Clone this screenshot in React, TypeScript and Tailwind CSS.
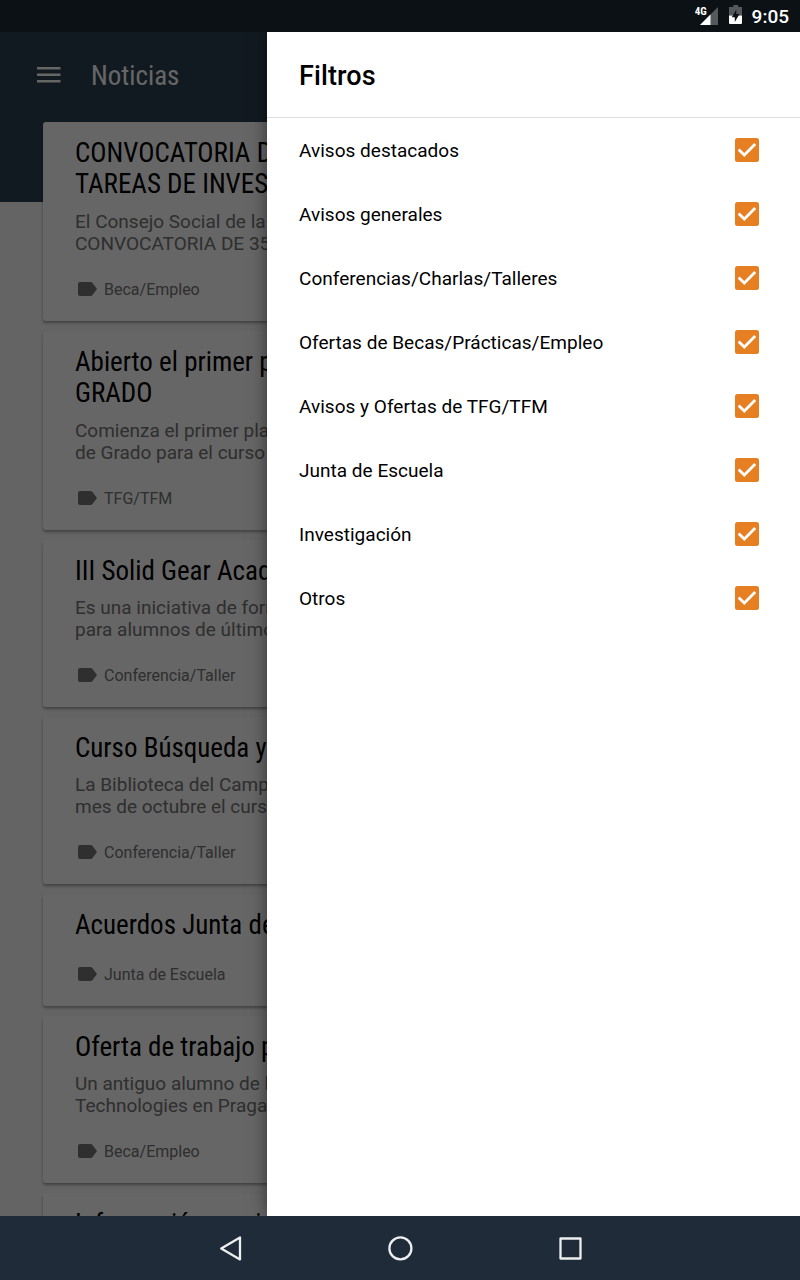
import React from "react";

type Notice = { title: string[]; body: string[]; tag: string };

const notices: Notice[] = [
  {
    title: ["CONVOCATORIA DE BECAS", "TAREAS DE INVESTIGACIÓN"],
    body: ["El Consejo Social de la Universidad", "CONVOCATORIA DE 35 BECAS"],
    tag: "Beca/Empleo",
  },
  {
    title: ["Abierto el primer plazo", "GRADO"],
    body: ["Comienza el primer plazo", "de Grado para el curso"],
    tag: "TFG/TFM",
  },
  {
    title: ["III Solid Gear Academy"],
    body: ["Es una iniciativa de formación", "para alumnos de últimos cursos"],
    tag: "Conferencia/Taller",
  },
  {
    title: ["Curso Búsqueda y gestión"],
    body: ["La Biblioteca del Campus", "mes de octubre el curso"],
    tag: "Conferencia/Taller",
  },
  { title: ["Acuerdos Junta de Escuela"], body: [], tag: "Junta de Escuela" },
  {
    title: ["Oferta de trabajo para"],
    body: ["Un antiguo alumno de la", "Technologies en Praga"],
    tag: "Beca/Empleo",
  },
  { title: ["Información previa"], body: [], tag: "" },
];

const filters = [
  "Avisos destacados",
  "Avisos generales",
  "Conferencias/Charlas/Talleres",
  "Ofertas de Becas/Prácticas/Empleo",
  "Avisos y Ofertas de TFG/TFM",
  "Junta de Escuela",
  "Investigación",
  "Otros",
];

const condensed = "font-['Roboto_Condensed',Roboto,sans-serif] [font-stretch:75%]";

function StatusBar() {
  return (
    <div className="flex h-8 items-center justify-end bg-[#0c1115] pr-[11px] text-white">
      <svg className="h-8 w-[28px]" viewBox="0 0 28 32">
        <path d="M23 7V25H5Z" fill="#55595c" />
        <path d="M15.5 14.5V25H5Z" fill="#fff" />
        <text x="-0.3" y="15" fill="#fff" fontSize="11" fontWeight="700" className={condensed}>
          4G
        </text>
      </svg>
      <svg className="ml-[6px] h-8 w-[14px]" viewBox="0 0 14 32">
        <path d="M4.3 5H9.2V7H13V15.5H0V7H4.3Z" fill="#55595c" />
        <path d="M0 15.5H13V23Q13 24 12 24H1Q0 24 0 23Z" fill="#fff" />
        <path d="M7.3 9.5V14H10.5L5.8 22V17.2H2.8Z" fill="#0c1115" />
      </svg>
      <span className="ml-[9px] pt-px text-[19px] leading-8 font-medium">9:05</span>
    </div>
  );
}

function NoticeCard({ title, body, tag }: Notice) {
  return (
    <article className="shrink-0 rounded-[3px] bg-white px-8 pt-4 pb-5 shadow-[0_2px_3px_rgba(0,0,0,0.35)]">
      <h2 className={`${condensed} text-[27px] leading-[31px] text-black ${title.length > 1 ? "pb-px" : ""}`}>
        {title.map((line) => (
          <span key={line} className="block whitespace-nowrap">{line}</span>
        ))}
      </h2>
      {body.length > 0 && (
        <p className="mt-[10px] mb-px text-[19px] leading-[22px] text-[#757575]">
          {body.map((line) => (
            <span key={line} className="block whitespace-nowrap">{line}</span>
          ))}
        </p>
      )}
      {tag && (
        <div className="flex h-[45px] items-center pt-[23px]">
          <svg className="mb-[2px] ml-[3px] h-[14px] w-[19px]" viewBox="0 0 19 14">
            <path d="M2 0H12.6Q13.8 0 14.5 1L19 7L14.5 13Q13.8 14 12.6 14H2Q0 14 0 12V2Q0 0 2 0Z" fill="#757575" />
          </svg>
          <span className="ml-[7px] text-base leading-[22px] text-[#757575]">{tag}</span>
        </div>
      )}
    </article>
  );
}

function NewsPage() {
  return (
    <div className="col-start-1 row-start-1 h-full min-w-0 overflow-hidden bg-[linear-gradient(#2f4153_170px,#fafafa_170px)]">
      <header className="flex h-[90px] items-center pb-1 pl-[37px]">
        <svg className="h-4 w-6" viewBox="0 0 24 16" fill="#fff">
          <path d="M0 0H23.5V2.5H0ZM0 6.4H23.5V8.9H0ZM0 12.9H23.5V15.4H0Z" />
        </svg>
        <h1 className={`${condensed} ml-[30px] pt-0.5 text-[27px] text-white`}>Noticias</h1>
      </header>
      <main className="mx-[43px] flex flex-col gap-[10px]">
        {notices.map((n) => (
          <NoticeCard key={n.title[0]} {...n} />
        ))}
      </main>
    </div>
  );
}

function FilterDrawer() {
  return (
    <aside className="relative col-start-1 row-start-1 ml-[267px] bg-white text-black shadow-[0_0_16px_rgba(0,0,0,0.5)]">
      <h2 className="flex h-[86px] items-center border-b border-[#dedede] pt-1 pl-8 text-[27px] font-medium tracking-[0.1px]">
        Filtros
      </h2>
      <ul>
        {filters.map((label) => (
          <li key={label} className="flex h-16 items-center justify-between pr-[41px] pl-8 text-[19px]">
            <span className="pt-0.5 tracking-[0.02px]">{label}</span>
            <svg className="size-6" viewBox="0 0 24 24">
              <rect width="24" height="24" rx="2.5" fill="#e67e22" />
              <path d="M3.6 11.6L9.3 17L20.2 5.9" fill="none" stroke="#fff" strokeWidth="2.8" />
            </svg>
          </li>
        ))}
      </ul>
    </aside>
  );
}

function NavigationBar() {
  return (
    <nav className="relative flex h-16 items-center justify-center gap-[142px] bg-[#1f2b38]">
      <svg className="size-7" viewBox="0 0 28 28" fill="none" stroke="#eceeef" strokeWidth="2.3" strokeLinejoin="round">
        <path d="M5.2 14.5L24 3.4V25.4Z" />
      </svg>
      <svg className="size-7" viewBox="0 0 28 28" fill="none" stroke="#eceeef" strokeWidth="2.3">
        <circle cx="14.4" cy="14.4" r="11" />
      </svg>
      <svg className="size-7" viewBox="0 0 28 28" fill="none" stroke="#eceeef" strokeWidth="2.3" strokeLinejoin="round">
        <rect x="4.5" y="4.5" width="20" height="20" />
      </svg>
    </nav>
  );
}

export default function App() {
  return (
    <div className="flex h-[1280px] w-[800px] flex-col overflow-hidden font-[Roboto,sans-serif]">
      <StatusBar />
      <div className="grid min-h-0 flex-1 grid-cols-1 grid-rows-[1184px] overflow-hidden">
        <NewsPage />
        <div className="relative col-start-1 row-start-1 bg-black/60" />
        <FilterDrawer />
      </div>
      <NavigationBar />
    </div>
  );
}
